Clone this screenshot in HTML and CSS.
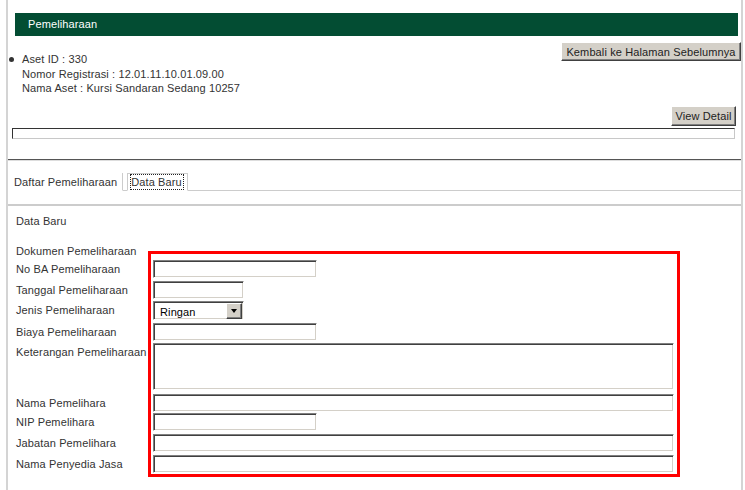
FILE: index.html
```html
<!DOCTYPE html>
<html>
<head>
<meta charset="utf-8">
<title>Pemeliharaan</title>
<link rel="stylesheet" href="styles.css">
</head>
<body>
<div class="page">
  <div class="title">Pemeliharaan</div>
  <div class="info">
    <div class="asset">
      <span class="dot"></span>
      <div class="asset-text">Aset ID : 330<br>Nomor Registrasi : 12.01.11.10.01.09.00<br>Nama Aset : Kursi Sandaran Sedang 10257</div>
    </div>
    <button class="btn btn-back">Kembali ke Halaman Sebelumnya</button>
  </div>
  <div class="view-row"><button class="btn btn-view">View Detail</button></div>
  <div class="detail-box"></div>
  <hr class="sep">
  <div class="tabs">
    <div class="tab tab-list">Daftar Pemeliharaan</div>
    <div class="tab tab-new"><span class="focus">Data Baru</span></div>
  </div>
  <div class="strip"></div>
  <div class="panel">
    <div class="panel-title">Data Baru</div>
    <div class="form">
      <div class="labels">
        <div class="lbl lbl-head">Dokumen Pemeliharaan</div>
        <div class="lbl h21">No BA Pemeliharaan</div>
        <div class="lbl h20">Tanggal Pemeliharaan</div>
        <div class="lbl h22">Jenis Pemeliharaan</div>
        <div class="lbl h20">Biaya Pemeliharaan</div>
        <div class="lbl h51">Keterangan Pemeliharaan</div>
        <div class="lbl h19">Nama Pemelihara</div>
        <div class="lbl h21">NIP Pemelihara</div>
        <div class="lbl h21">Jabatan Pemelihara</div>
        <div class="lbl h18">Nama Penyedia Jasa</div>
      </div>
      <div class="box">
        <div class="row h21"><input class="field w-mid" type="text"></div>
        <div class="row h20"><input class="field w-short" type="text"></div>
        <div class="row h22">
          <div class="select w-short"><span class="sel-text">Ringan</span><span class="sel-btn"><span class="tri"></span></span></div>
        </div>
        <div class="row h20"><input class="field w-mid" type="text"></div>
        <div class="row h51"><textarea class="field area w-full"></textarea></div>
        <div class="row h19"><input class="field w-full" type="text"></div>
        <div class="row h21"><input class="field w-mid" type="text"></div>
        <div class="row h21"><input class="field w-full" type="text"></div>
        <div class="row h18"><input class="field w-full" type="text"></div>
      </div>
    </div>
  </div>
</div>
</body>
</html>
```

FILE: styles.css
```css
* { box-sizing: border-box; }

body {
  margin: 0;
  font: 11px "Liberation Sans", Arial, sans-serif;
  letter-spacing: 0.12px;
  color: #333;
  background: #fff;
}

.page {
  margin-left: 6px;
  width: 737px;
  min-height: 490px;
  padding-top: 13px;
  border-left: 2px solid #d4d4d4;
  border-right: 2px solid #d4d4d4;
}

.title {
  margin: 0 3px 0 7px;
  height: 23px;
  line-height: 23px;
  padding-left: 13px;
  background: #034d33;
  color: #fff;
}

.info {
  display: flex;
  justify-content: space-between;
  align-items: flex-start;
  margin-top: 6px;
}

.asset {
  display: flex;
  align-items: flex-start;
  margin-top: 10px;
  padding-left: 1px;
}

.dot {
  width: 5px;
  height: 5px;
  margin-top: 5px;
  margin-right: 8px;
  border-radius: 50%;
  background: #333;
  flex: none;
}

.asset-text {
  line-height: 14.5px;
}

.btn {
  font: 11px "Liberation Sans", Arial, sans-serif;
  letter-spacing: 0.12px;
  color: #222;
  background: #d4d0c8;
  height: 19px;
  padding: 0 3px;
  border: 1px solid;
  border-color: #fff #404040 #404040 #fff;
  box-shadow: inset -1px -1px #808080;
}

.btn-back { width: 180px; }
.btn-view { width: 65px; height: 20px; }

.view-row {
  display: flex;
  justify-content: flex-end;
  margin: 10px 5px 0 0;
}

.detail-box {
  margin: 2px 6px 0 4px;
  height: 11px;
  border: 1px solid;
  border-color: #333 #c8c8c8 #c8c8c8 #333;
}

.sep {
  margin: 20px 0 0;
  height: 0;
  border: 0;
  border-top: 1px solid #555;
  border-bottom: 1px solid #ddd;
}

.tabs {
  display: flex;
  margin-top: 12px;
  height: 18px;
  border-bottom: 1px solid #ccc;
}

.tab {
  height: 18px;
  padding-top: 3px;
  line-height: 13px;
  margin-bottom: -1px;
  border-bottom: 1px solid #fff;
  color: #333;
}

.tab-list {
  padding-left: 6px;
  padding-right: 5px;
  border-right: 1px solid #ccc;
}

.tab-new {
  margin-left: 4px;
  padding-left: 4px;
  padding-right: 4px;
  padding-top: 1px;
  border: 1px solid #ccc;
  border-bottom: 1px solid #fff;
}

.focus {
  display: inline-block;
  line-height: 14px;
  padding: 0 1px 0 0;
  margin-left: -1px;
  outline: 1px dotted #222;
  outline-offset: 0;
}

.strip {
  height: 15px;
  border-bottom: 2px solid #ccc;
}

.panel {
  padding: 8px 0 0 8px;
}

.panel-title {
  line-height: 14px;
}

.form {
  display: flex;
  margin-top: 16px;
}

.labels {
  width: 132px;
  display: flex;
  flex-direction: column;
}

.lbl {
  line-height: 18px;
  white-space: nowrap;
}

.lbl-head {
  height: 16px;
  line-height: 14px;
}

.h18 { height: 18px; }
.h19 { height: 19px; }
.h20 { height: 20px; }
.h21 { height: 21px; }
.h22 { height: 22px; }
.h51 { height: 51px; }

.box {
  margin-top: 7px;
  width: 532px;
  border: 3px solid #f00;
  padding: 6px 3px 1px 2px;
}

.row { display: flex; align-items: flex-start; }

.field {
  display: block;
  height: 18px;
  margin: 0;
  padding: 0 3px;
  font: 11px "Liberation Sans", Arial, sans-serif;
  background: #fff;
  border: 1px solid;
  border-color: #808080 #fff #fff #808080;
  box-shadow: inset 1px 1px #404040, inset -1px -1px #d4d0c8;
  outline: none;
}

.area {
  height: 47px;
  resize: none;
}

.w-short { width: 91px; }
.w-mid { width: 164px; }
.w-full { width: 521px; }

.select {
  display: flex;
  align-items: center;
  justify-content: space-between;
  height: 19px;
  border: 1px solid;
  border-color: #808080 #fff #fff #808080;
  box-shadow: inset 1px 1px #404040, inset -1px -1px #d4d0c8;
  padding: 2px 1px 1px 2px;
  background: #fff;
  color: #000;
}

.sel-text {
  padding: 2px 0 0 4px;
  line-height: 14px;
}

.sel-btn {
  width: 16px;
  height: 16px;
  background: #d4d0c8;
  border: 1px solid;
  border-color: #fff #404040 #404040 #fff;
  box-shadow: inset -1px -1px #808080;
  display: flex;
  align-items: center;
  justify-content: center;
}

.tri {
  width: 0;
  height: 0;
  border-left: 3px solid transparent;
  border-right: 3px solid transparent;
  border-top: 4px solid #000;
}
```
